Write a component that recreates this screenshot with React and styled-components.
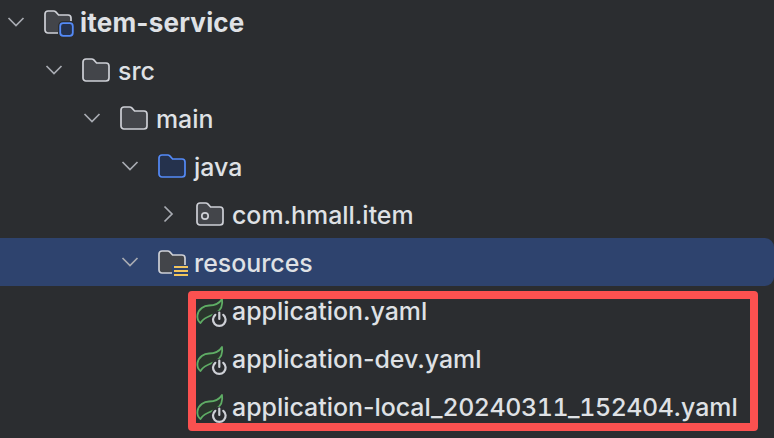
import React from "react";
import styled, { createGlobalStyle } from "styled-components";

const GlobalStyle = createGlobalStyle`
  html, body {
    margin: 0;
    height: 100%;
    background: #2b2d30;
    overflow: hidden;
  }
`;

const Tree = styled.div`
  width: 774px;
  height: 438px;
  margin-top: -2px;
  font-family: Inter, "Noto Sans", sans-serif;
  color: #dfe1e5;
`;

const Row = styled.div`
  display: flex;
  align-items: center;
  height: 48px;
  padding-left: ${(p) => 6 + p.$level * 38}px;
  background: ${(p) => (p.$selected ? "#2e436e" : "transparent")};
  border-radius: ${(p) => (p.$selected ? "0 9px 9px 0" : "0")};
`;

const ChevronSlot = styled.span`
  display: flex;
  width: 20px;
  margin-right: 18px;
  justify-content: center;
`;

const IconSlot = styled.span`
  display: flex;
  flex: none;
  width: 28px;
  height: 28px;
  margin-right: 8px;
  align-items: center;
  justify-content: center;
`;

const Label = styled.span`
  margin-top: 2px;
  font-size: ${(p) => (p.$bold ? 26 : 24.9)}px;
  line-height: 48px;
  white-space: nowrap;
  font-weight: ${(p) => (p.$bold ? 700 : 450)};
  letter-spacing: ${(p) => (p.$bold ? "0.2px" : "0")};
`;

const Digits = styled.span`
  font-variant-numeric: tabular-nums;
  letter-spacing: -0.42px;
`;

const FileGroup = styled.div`
  position: relative;
`;

const Highlight = styled.div`
  position: absolute;
  top: 5px;
  left: 188px;
  width: 570px;
  height: 140px;
  box-sizing: border-box;
  border: 8px solid #fb5150;
  border-radius: 4px;
  pointer-events: none;
`;

const FOLDER =
  "M1 4a3 3 0 0 1 3-3h5.6c.9 0 1.6.3 2.2.9L14.6 5H24a3 3 0 0 1 3 3v12a3 3 0 0 1-3 3H4a3 3 0 0 1-3-3z";

const Chevron = ({ open }) => (
  <svg width="20" height="20" viewBox="0 0 20 20" fill="none" stroke="#a8abb2" strokeWidth="1.7">
    <path d={open ? "M2.5 6l7.5 7.5L17.5 6" : "M6.5 2.5L14 10l-7.5 7.5"} />
  </svg>
);

const Folder = ({ blue, children }) => (
  <svg width="28" height="24" viewBox="0 0 28 24" overflow="visible" strokeWidth="1.7">
    <path
      d={FOLDER}
      fill={blue ? "#25324d" : "#43454a"}
      stroke={blue ? "#548af7" : "#ced0d6"}
    />
    {children}
  </svg>
);

const ModuleBadge = () => (
  <>
    <rect x="14" y="11" width="18" height="18" rx="5" fill="#2b2d30" />
    <rect x="16.2" y="13.2" width="12.6" height="12.6" rx="3" fill="#25324d" stroke="#548af7" strokeWidth="1.8" />
  </>
);

const PackageDot = () => <circle cx="9" cy="14" r="3.2" fill="none" stroke="#ced0d6" />;

const ResourceLines = () => (
  <>
    <rect x="14" y="15" width="17" height="13" fill="#2e436e" />
    <path d="M16 17h14M16 21h14M16 25h14" stroke="#f2c55c" strokeWidth="2" fill="none" />
  </>
);

const SpringConfig = () => (
  <svg width="28" height="28" viewBox="0 -1 28 28" overflow="visible">
    <path
      d="M26 2C27 8 25 13 20 16 15 19 9 20 6 24L4.5 26C2 24 1 21 1.5 18 2.5 12 8 8.5 13 8.5 18 8.5 23 7 26 2z"
      fill="#2a352c"
      stroke="#5fad65"
      strokeWidth="1.8"
      strokeLinejoin="round"
    />
    <circle cx="23.3" cy="22.3" r="8.5" fill="#2b2d30" />
    <path
      d="M19.3 17.8a6.3 6.3 0 1 0 8 0M23.3 15.5v6.5"
      fill="none"
      stroke="#ced0d6"
      strokeWidth="2.2"
      strokeLinecap="round"
    />
  </svg>
);

const folders = [
  { level: 0, name: "item-service", open: true, bold: true, badge: <ModuleBadge /> },
  { level: 1, name: "src", open: true },
  { level: 2, name: "main", open: true },
  { level: 3, name: "java", open: true, blue: true },
  { level: 4, name: "com.hmall.item", open: false, badge: <PackageDot /> },
  { level: 3, name: "resources", open: true, selected: true, badge: <ResourceLines /> },
];

const files = [
  { prefix: "application.yaml" },
  { prefix: "application-dev.yaml" },
  { prefix: "application-local_", stamp: "20240311_152404", suffix: ".yaml" },
];

export default function App() {
  return (
    <>
      <GlobalStyle />
      <Tree>
        {folders.map((f) => (
          <Row key={f.name} $level={f.level} $selected={f.selected}>
            <ChevronSlot>
              <Chevron open={f.open} />
            </ChevronSlot>
            <IconSlot>
              <Folder blue={f.blue}>{f.badge}</Folder>
            </IconSlot>
            <Label $bold={f.bold}>{f.name}</Label>
          </Row>
        ))}
        <FileGroup>
          {files.map((f) => (
            <Row key={f.prefix} $level={4}>
              <ChevronSlot />
              <IconSlot>
                <SpringConfig />
              </IconSlot>
              <Label>
                {f.prefix}
                {f.stamp && <Digits>{f.stamp}</Digits>}
                {f.suffix}
              </Label>
            </Row>
          ))}
          <Highlight />
        </FileGroup>
      </Tree>
    </>
  );
}
